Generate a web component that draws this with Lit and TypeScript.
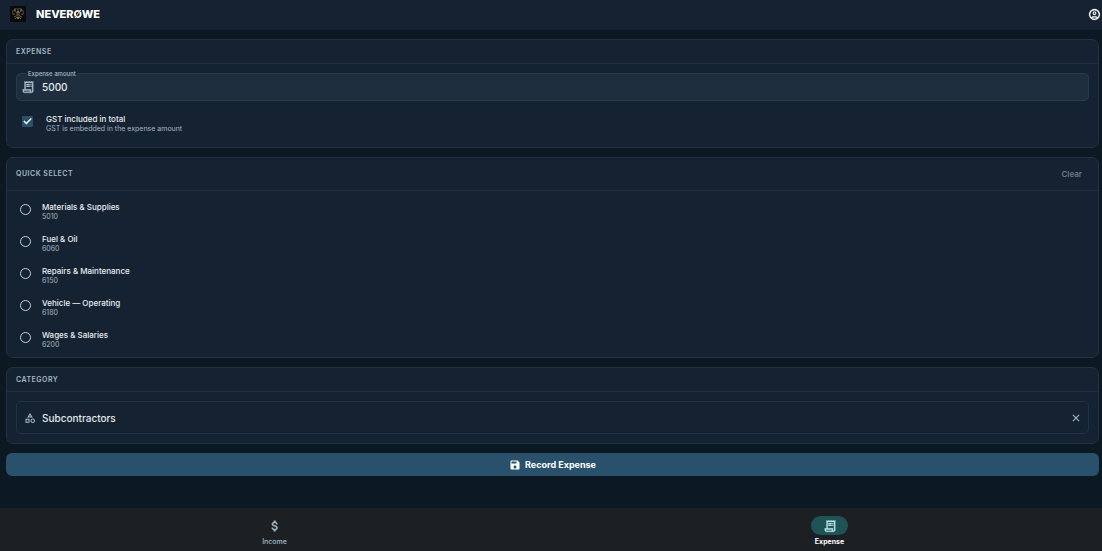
import { LitElement, html, css, svg } from "lit";
import { customElement, state } from "lit/decorators.js";

interface QuickItem {
  name: string;
  code: string;
}

const QUICK_ITEMS: QuickItem[] = [
  { name: "Materials & Supplies", code: "5010" },
  { name: "Fuel & Oil", code: "6060" },
  { name: "Repairs & Maintenance", code: "6150" },
  { name: "Vehicle — Operating", code: "6180" },
  { name: "Wages & Salaries", code: "6200" },
];

const icon = (size: number, body: unknown) => html`
  <svg width=${size} height=${size} viewBox="0 0 24 24" fill="currentColor" aria-hidden="true">${body}</svg>
`;

const receipt = svg`<path stroke="currentColor" stroke-width="0.5" d="M19.500 3.500 18 2l-1.500 1.500L15 2l-1.500 1.500L12 2l-1.500 1.500L9 2 7.500 3.500 6 2v14H3v3c0 1.660 1.340 3 3 3h12c1.660 0 3-1.340 3-3V2l-1.500 1.500zM15 20H6c-.550 0-1-.450-1-1v-1h10v2zm4-1c0 .550-.450 1-1 1s-1-.450-1-1v-3H8V5h11v14z"/><path d="M9 7h6v2H9zM16 7h2v2h-2zM9 10h6v2H9zM16 10h2v2h-2z"/>`;
const account = svg`<path stroke="currentColor" stroke-width="0.6" d="M12 2C6.480 2 2 6.480 2 12s4.480 10 10 10 10-4.480 10-10S17.520 2 12 2zM7.350 18.500C8.660 17.560 10.260 17 12 17s3.340.560 4.650 1.500C15.340 19.440 13.740 20 12 20s-3.340-.560-4.650-1.500zm10.790-1.380C16.450 15.800 14.320 15 12 15s-4.450.800-6.140 2.120C4.700 15.730 4 13.950 4 12c0-4.420 3.580-8 8-8s8 3.580 8 8c0 1.950-.700 3.730-1.860 5.120z"/><path d="M12 6c-1.930 0-3.500 1.570-3.500 3.500S10.070 13 12 13s3.500-1.570 3.500-3.500S13.930 6 12 6zm0 5c-.830 0-1.500-.670-1.500-1.500S11.170 8 12 8s1.500.670 1.500 1.500S12.830 11 12 11z"/>`;
const category = svg`<path d="M12 2 6.500 11h11L12 2zm0 3.840L13.930 9h-3.870L12 5.840zM17.500 13c-2.490 0-4.500 2.010-4.500 4.500s2.010 4.500 4.500 4.500 4.500-2.010 4.500-4.500-2.010-4.500-4.500-4.500zm0 7a2.500 2.500 0 0 1 0-5 2.500 2.500 0 0 1 0 5zM3 21.500h8v-8H3v8zm2-6h4v4H5v-4z"/>`;
const cross = svg`<path d="M19 6.410 17.590 5 12 10.590 6.410 5 5 6.410 10.590 12 5 17.590 6.410 19 12 13.410 17.590 19 19 17.590 13.410 12z"/>`;
const save = svg`<path d="M17 3H5a2 2 0 0 0-2 2v14a2 2 0 0 0 2 2h14c1.100 0 2-.900 2-2V7l-4-4zm-5 16c-1.660 0-3-1.340-3-3s1.340-3 3-3 3 1.340 3 3-1.340 3-3 3zm3-10H5V5h10v4z"/>`;
const dollar = svg`<path stroke="currentColor" stroke-width="0.6" d="M11.800 10.900c-2.270-.590-3-1.200-3-2.150 0-1.090 1.010-1.850 2.700-1.850 1.780 0 2.440.850 2.500 2.100h2.210c-.070-1.720-1.120-3.300-3.210-3.810V3h-3v2.160c-1.940.420-3.500 1.680-3.500 3.610 0 2.310 1.910 3.460 4.700 4.130 2.500.600 3 1.480 3 2.410 0 .690-.490 1.790-2.700 1.790-2.060 0-2.870-.920-2.980-2.100h-2.200c.120 2.190 1.760 3.420 3.680 3.830V21h3v-2.150c1.950-.370 3.500-1.500 3.500-3.550 0-2.840-2.430-3.810-4.700-4.400z"/>`;

@customElement("app-root")
export class AppRoot extends LitElement {
  static styles = css`
    :host {
      display: flex;
      flex-direction: column;
      min-height: 100vh;
      background: #0c1822;
      color: #e3e9ef;
      font-family: Inter, "Liberation Sans", sans-serif;
      font-size: 8px;
      line-height: 10px;
    }
    * {
      box-sizing: border-box;
    }
    svg {
      display: block;
      flex: none;
    }
    button,
    input {
      margin: 0;
      font: inherit;
      color: inherit;
    }
    button {
      border: 0;
      padding: 0;
      background: none;
      cursor: pointer;
    }
    .bar {
      display: flex;
      align-items: center;
      height: 30px;
      padding: 0 1px 2px 10px;
      background: #152231;
      color: #fff;
    }
    .brand {
      flex: 1;
      margin: 0 0 0 10px;
      font-size: 11px;
      line-height: 14px;
      font-weight: 800;
    }
    .slashed {
      background: linear-gradient(135deg, #fff 46%, #d9a83a 46%, #d9a83a 54%, #fff 54%);
      background-clip: text;
      color: transparent;
    }
    main {
      flex: 1;
      display: flex;
      flex-direction: column;
      gap: 9px;
      padding: 9px 3px 9px 6px;
    }
    .card {
      border: 1px solid #203343;
      border-radius: 7px;
      background: #152231;
    }
    .head {
      display: flex;
      align-items: center;
      justify-content: space-between;
      height: 24px;
      padding: 0 9px;
      border-bottom: 1px solid #203040;
    }
    .head.tall {
      height: 33px;
    }
    h2 {
      margin: 0;
      font-size: 7px;
      line-height: 10px;
      font-weight: 600;
      letter-spacing: 0.5px;
      text-transform: uppercase;
      color: #a4b8c6;
    }
    .clear {
      padding: 0 7px;
      font-size: 8px;
      font-weight: 600;
      color: #6b7a86;
    }
    .body {
      padding: 9px;
    }
    .field {
      position: relative;
      display: flex;
      align-items: center;
      gap: 7px;
      height: 28px;
      padding: 0 4px;
      border: 1px solid #263c4e;
      border-radius: 5px;
      background: #1e2e3f;
      color: #a9c0ce;
    }
    .field label {
      position: absolute;
      top: -5px;
      left: 9px;
      padding: 0 2px;
      font-size: 6px;
      line-height: 10px;
      font-weight: 500;
      background: linear-gradient(#152231 50%, #1e2e3f 50%);
      color: #a9bdcb;
    }
    .field input {
      flex: 1;
      min-width: 0;
      border: 0;
      padding: 0;
      outline: 0;
      background: none;
      font-size: 10px;
      line-height: 14px;
      font-weight: 500;
      color: #e3e9ef;
    }
    .picker {
      gap: 6px;
      height: 33px;
      padding: 0 6px 0 7px;
      border-color: #203343;
      background: none;
    }
    .option {
      display: flex;
      align-items: flex-start;
    }
    .option input {
      flex: none;
      margin-top: 2px;
    }
    .text {
      display: flex;
      flex-direction: column;
    }
    .name {
      font-weight: 500;
      color: #e9eef3;
    }
    .note {
      font-size: 7px;
      line-height: 9px;
      color: #a4b8c6;
    }
    .check {
      gap: 13px;
      padding: 13px 6px 5px;
    }
    .check input {
      appearance: none;
      display: grid;
      place-items: center;
      width: 11px;
      height: 11px;
      border: 1px solid #9db2c1;
      border-radius: 1px;
    }
    .check input:checked {
      border-color: #2a516b;
      background: #2a516b;
    }
    .check input:checked::before {
      content: "";
      width: 9px;
      height: 9px;
      background: #fff;
      clip-path: polygon(5% 50%, 15% 40%, 37% 62%, 87% 12%, 97% 22%, 37% 82%);
    }
    .list {
      display: grid;
      gap: 13px;
      padding: 11px 13px 8px;
    }
    .radio {
      gap: 11px;
    }
    .radio input {
      appearance: none;
      display: grid;
      place-items: center;
      width: 11px;
      height: 11px;
      border: 1px solid #bdd2df;
      outline: 0;
      border-radius: 50%;
    }
    .radio input:checked::before {
      content: "";
      width: 5px;
      height: 5px;
      border-radius: 50%;
      background: #bdd2df;
    }
    .record {
      display: flex;
      align-items: center;
      justify-content: center;
      gap: 4px;
      height: 23px;
      border-radius: 6px;
      background: #2a516b;
      font-size: 9px;
      font-weight: 700;
      color: #fff;
    }
    nav {
      display: grid;
      grid-template-columns: 1fr 1fr;
      gap: 10px;
      padding: 8px 0 4px 2px;
      background: #1c2023;
    }
    nav a {
      display: flex;
      flex-direction: column;
      align-items: center;
      gap: 2px;
      font-size: 7px;
      line-height: 10px;
      font-weight: 500;
      text-decoration: none;
      color: #a4b8c6;
    }
    .pill {
      display: grid;
      place-items: center;
      width: 37px;
      height: 19px;
      border-radius: 10px;
    }
    nav a.active {
      font-weight: 700;
      color: #fff;
    }
    .active .pill {
      background: #1f5358;
      color: #b9e9e6;
    }
  `;

  @state() private selected = "";
  @state() private categoryName = "Subcontractors";

  private logo() {
    return html`
      <svg width="16" height="16" viewBox="0 0 16 16" role="img" aria-label="Logo">
        <rect width="16" height="16" fill="#0b0a09" />
        <g fill="none" stroke="#7a6750" stroke-width="0.8">
          <path d="M8 2v11M6.500 2.500C3 3 2 6 3 8.500M9.500 2.500C13 3 14 6 13 8.500M4.500 5l2.500 1.500v3L4 11M11.500 5 9 6.500v3l3 1.500M5 13l2-2M11 13 9 11" />
        </g>
        <g fill="#c9b694">
          <circle cx="5" cy="4" r="0.700" /><circle cx="11" cy="4" r="0.700" />
          <circle cx="4" cy="8" r="0.600" /><circle cx="12" cy="8" r="0.600" />
          <circle cx="8" cy="6" r="0.700" /><circle cx="8" cy="12" r="0.800" />
        </g>
      </svg>
    `;
  }

  render() {
    return html`
      <header class="bar">
        ${this.logo()}
        <h1 class="brand">NEVER<span class="slashed">Ø</span>WE</h1>
        <button aria-label="Account">${icon(13, account)}</button>
      </header>
      <main>
        <section class="card">
          <div class="head"><h2>Expense</h2></div>
          <div class="body">
            <div class="field">
              ${icon(14, receipt)}
              <label for="amount">Expense amount</label>
              <input id="amount" inputmode="decimal" value="5000" />
            </div>
            <label class="option check">
              <input type="checkbox" checked />
              <span class="text">
                <span class="name">GST included in total</span>
                <span class="note">GST is embedded in the expense amount</span>
              </span>
            </label>
          </div>
        </section>
        <section class="card">
          <div class="head tall">
            <h2>Quick select</h2>
            <button class="clear" @click=${() => (this.selected = "")}>Clear</button>
          </div>
          <div class="list">
            ${QUICK_ITEMS.map(
              (item) => html`
                <label class="option radio">
                  <input
                    type="radio"
                    name="quick"
                    .checked=${this.selected === item.code}
                    @change=${() => (this.selected = item.code)}
                  />
                  <span class="text">
                    <span class="name">${item.name}</span>
                    <span class="note">${item.code}</span>
                  </span>
                </label>
              `
            )}
          </div>
        </section>
        <section class="card">
          <div class="head"><h2 id="category">Category</h2></div>
          <div class="body">
            <div class="field picker">
              ${icon(12, category)}
              <input aria-labelledby="category" .value=${this.categoryName} />
              <button aria-label="Clear category" @click=${() => (this.categoryName = "")}>${icon(12, cross)}</button>
            </div>
          </div>
        </section>
        <button class="record">${icon(12, save)}Record Expense</button>
      </main>
      <nav>
        <a href="#income"><span class="pill">${icon(14, dollar)}</span>Income</a>
        <a class="active" href="#expense" aria-current="page"><span class="pill">${icon(14, receipt)}</span>Expense</a>
      </nav>
    `;
  }
}
